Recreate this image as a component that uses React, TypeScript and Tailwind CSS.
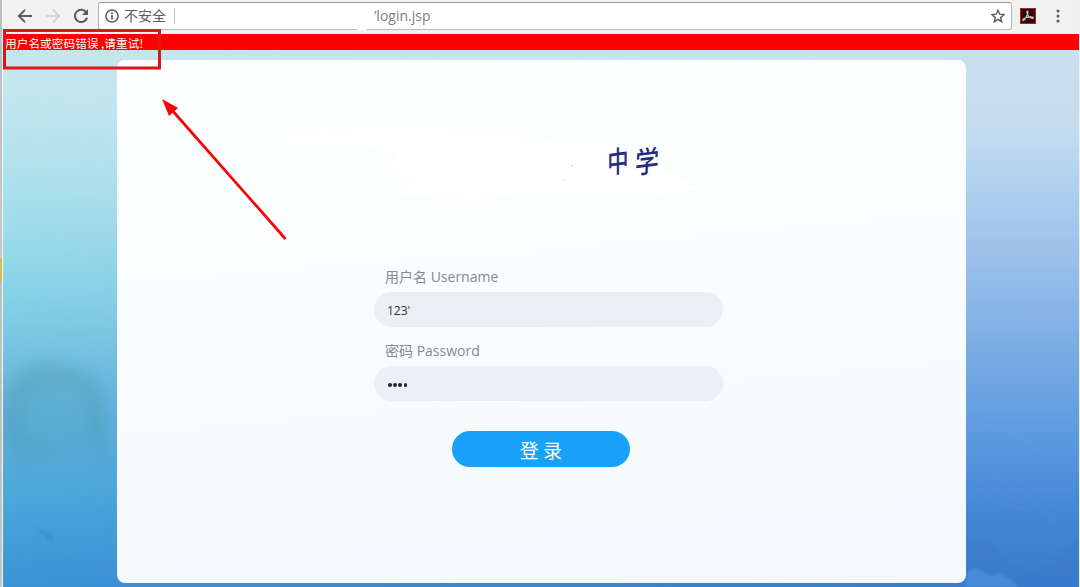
import type { ReactNode } from "react";

function Toolbar() {
  return (
    <header className="flex h-[34px] shrink-0 items-start bg-[#f1f1f1] pl-[14px] text-[#5a5a5a]">
      <div className="flex h-[32px] w-[81px] items-center gap-[12px]">
        <svg width="16" height="16" viewBox="0 0 16 16" fill="none" stroke="#5a5a5a" strokeWidth="1.9">
          <path d="M15 8H2M8 1.8L1.8 8L8 14.2" />
        </svg>
        <svg width="16" height="16" viewBox="0 0 16 16" fill="none" stroke="#cfcfcf" strokeWidth="1.7">
          <path d="M1 8H14M8 1.8L14.2 8L8 14.2" />
        </svg>
        <svg width="16" height="16" viewBox="0 0 16 16" fill="none" stroke="#5a5a5a" strokeWidth="2">
          <path d="M13.4 4.6A6.2 6.2 0 1 0 14.1 9.6" />
          <path d="M15 1V7H9Z" fill="#5a5a5a" stroke="none" />
        </svg>
      </div>
      <div className="relative mt-[2px] flex h-[28px] w-[914px] items-center rounded-[3px] border border-[#b8b8b8] border-t-[#9c9c9c] bg-white pl-[6px]">
        <svg width="14" height="14" viewBox="0 0 14 14" fill="none" stroke="#5a5a5a" strokeWidth="1.5">
          <circle cx="7" cy="7" r="6.1" />
          <path d="M7 6V10.5M7 3.3V4.9" strokeWidth="1.7" />
        </svg>
        <span className="-mt-px ml-[5px] w-[43px] whitespace-nowrap text-[14px] leading-[25px] text-[#5d5d5d]">不安全</span>
        <span className="ml-[7px] h-[16px] w-px bg-[#c2c2c2]" />
        <span className="ml-[199px] whitespace-nowrap font-['Open_Sans','Noto_Sans_CJK_SC',sans-serif] text-[14px] leading-[26px] text-[#808080]">
          ’login.jsp
        </span>
        <span className="absolute -bottom-px left-[258px] h-px w-[10px] bg-white" />
        <svg className="mr-[6px] ml-auto" width="14" height="14" viewBox="0 0 14 14" fill="none" stroke="#5a5a5a" strokeWidth="1.4">
          <path d="M7 1.2L8.7 5.2L13 5.6L9.7 8.4L10.7 12.7L7 10.4L3.3 12.7L4.3 8.4L1 5.6L5.3 5.2Z" />
        </svg>
      </div>
      <svg className="mt-[8px] ml-[8px]" width="16" height="16" viewBox="0 0 16 16">
        <rect width="16" height="16" fill="#b51d20" />
        <rect x="1" y="1" width="14" height="14" fill="#2b0b0c" />
        <path d="M7.3 3C8.6 3 7.9 6.2 6.2 9.1C4.8 11.6 3 13.2 2.7 12.1C2.4 10.9 5.9 9.3 9.3 8.9C12.4 8.5 14 9.3 13 10.2C11.8 11.1 8.6 8.9 7.5 6.2C6.9 4.5 6.7 3 7.3 3Z" fill="none" stroke="#c9bfbf" strokeWidth="1.2" />
      </svg>
      <svg className="mt-[9px] ml-[19px]" width="6" height="14" viewBox="0 0 6 14" fill="#5a5a5a">
        <circle cx="3" cy="2" r="1.5" />
        <circle cx="3" cy="7" r="1.5" />
        <circle cx="3" cy="12" r="1.5" />
      </svg>
    </header>
  );
}

function Scenery() {
  return (
    <div className="absolute inset-0 bg-[linear-gradient(180deg,#c5e6f0_0%,#c4e7ef_8%,#a9e0eb_27%,#87d4e7_45%,#77c5e1_55%,#61b3dc_68%,#4ba7db_84%,#3c93d6_100%)]">
      <div className="absolute inset-0 bg-[linear-gradient(180deg,#c9dff0_0%,#c6ddf0_13%,#b2d2ee_24%,#a4c5ec_34%,#8bb7e8_47%,#72a8e2_60%,#5a99df_73%,#4386d6_87%,#3a7bcc_100%)] [mask-image:linear-gradient(90deg,transparent,black_88%)]" />
      <svg className="absolute inset-0" width="1076" height="537" viewBox="0 0 1076 537">
        <defs>
          <filter id="soft" x="-30%" y="-30%" width="160%" height="160%">
            <feGaussianBlur stdDeviation="7" />
          </filter>
          <filter id="faint" x="-30%" y="-30%" width="160%" height="160%">
            <feGaussianBlur stdDeviation="1.5" />
          </filter>
        </defs>
        <g filter="url(#soft)" fill="#4a93a8">
          <path d="M8 330Q24 310 50 315L95 328L108 395L101 425L86 385L78 340L30 345L16 375L42 402L20 420L-5 390Z" opacity=".22" />
          <ellipse cx="50" cy="360" rx="54" ry="50" opacity=".18" />
        </g>
        <g filter="url(#faint)">
          <path d="M34 478L47 484L52 492L43 488Z" fill="#347eaf" opacity=".4" />
          <path d="M962 491Q985 480 996 505L1030 525L1076 490V537H962Z" fill="#3475c5" opacity=".2" />
          <path d="M963 522L973 518L988 526L998 523L1017 537H963Z" fill="#4d98e4" opacity=".6" />
          <path d="M970 370L1015 385L1040 405M990 425L1030 450L1055 475M975 440L1000 455L1030 460" fill="none" stroke="#77aaea" strokeWidth="2" opacity=".15" />
        </g>
      </svg>
    </div>
  );
}

function Banner() {
  return (
    <div className="relative h-[217px] w-full">
      <svg className="absolute inset-0" width="849" height="217" viewBox="0 0 849 217" fill="white">
        <path d="M160 73L315 70L447 83L500 87L580 128L548 134L490 131L410 132L355 139L275 133L300 121L270 108L283 93L250 85L160 81Z" />
        <circle cx="455" cy="106" r=".8" fill="#bbb" />
        <circle cx="447" cy="120" r=".7" fill="#ccc" />
      </svg>
      <h1 className="relative flex gap-[3px] pt-[84px] pl-[488px] text-[26px] leading-[32px] font-medium text-[#252d82]">
        <span className="origin-center scale-x-[.82] scale-y-[1.14] -skew-y-6">中</span>
        <span className="origin-center scale-x-[.92] scale-y-[1.14] -skew-x-3 -skew-y-6">学</span>
      </h1>
    </div>
  );
}

function Field({ label, children }: { label: string; children: ReactNode }) {
  return (
    <label className="block h-[74px] w-[349px]">
      <span className="block pl-[11px] font-['Open_Sans','Noto_Sans_CJK_SC',sans-serif] text-[14px] leading-[15px] text-[#858b90]">
        {label}
      </span>
      {children}
    </label>
  );
}

function LoginCard() {
  return (
    <main className="relative mt-[10px] ml-[114px] h-[523px] w-[849px] rounded-[8px] bg-[linear-gradient(175deg,#fdffff_0%,#f9fdff_45%,#f4f9fe_100%)]">
      <Banner />
      <form className="-mt-[8px] pl-[257px]">
        <Field label="用户名 Username">
          <input
            className="mt-[8px] h-[35px] w-full rounded-full bg-[#ebf0f5] pt-[2px] pl-[13px] font-['Open_Sans','Noto_Sans_CJK_SC',sans-serif] text-[12px] text-[#333] outline-none"
            defaultValue="123'"
          />
        </Field>
        <Field label="密码 Password">
          <span className="mt-[8px] flex h-[35px] w-full items-center gap-[1.5px] rounded-full bg-[linear-gradient(100deg,#ebf0f5,#eaeef7)] pt-[3px] pl-[14px]">
            <i className="size-[3.7px] rounded-full bg-[#222]" />
            <i className="size-[3.7px] rounded-full bg-[#222]" />
            <i className="size-[3.7px] rounded-full bg-[#222]" />
            <i className="size-[3.7px] rounded-full bg-[#222]" />
          </span>
        </Field>
        <button type="button" className="mt-[14px] ml-[78px] h-[36px] w-[178px] rounded-full bg-[#19a0f8] text-[19px] leading-[35px] text-white">
          登 录
        </button>
      </form>
    </main>
  );
}

function Annotation() {
  return (
    <svg className="pointer-events-none absolute inset-0" width="1080" height="587" viewBox="0 0 1080 587">
      <rect x="4.5" y="30.5" width="155" height="37.5" fill="none" stroke="#e31313" strokeWidth="3" />
      <path d="M171 109L285.5 239" stroke="#f50505" strokeWidth="2.8" />
      <path d="M162 99L178 108L169 116Z" fill="#f50505" />
    </svg>
  );
}

export default function App() {
  return (
    <div className="relative flex h-[587px] w-[1080px] overflow-hidden bg-[#eeeff1] font-['Noto_Sans_CJK_SC',sans-serif]">
      <aside className="w-[3px] shrink-0 border-r border-[#f5f5f5] bg-[linear-gradient(#b8bcc5_0%,#c5c7cc_44%,#d3bc55_44%,#d3bc55_48%,#bcc0c8_48%,#c2c4ca_100%)]" />
      <div className="flex w-[1076px] flex-col">
        <Toolbar />
        <div className="flex h-[16px] shrink-0 items-center bg-[#ff0000] pl-[2px]">
          <p className="whitespace-nowrap pt-px text-[11.7px] leading-[16px] text-white">用户名或密码错误 ,请重试!</p>
        </div>
        <section className="relative h-[537px]">
          <Scenery />
          <LoginCard />
        </section>
      </div>
      <Annotation />
    </div>
  );
}
